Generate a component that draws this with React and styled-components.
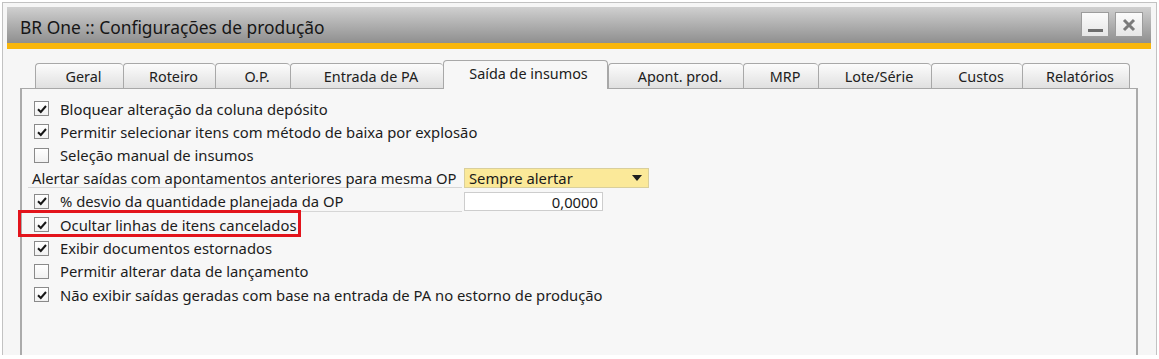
import React from 'react'
import styled, { createGlobalStyle } from 'styled-components'

const GlobalStyle = createGlobalStyle`
  body {
    margin: 0;
    background: #ffffff;
    font-family: "Noto Sans", "DejaVu Sans", sans-serif;
    color: #1e1e1e;
  }
`

const tabs = [
  { label: 'Geral', width: 88 },
  { label: 'Roteiro', width: 92 },
  { label: 'O.P.', width: 75 },
  { label: 'Entrada de PA', width: 153 },
  { label: 'Saída de insumos', width: 165, active: true },
  { label: 'Apont. prod.', width: 135 },
  { label: 'MRP', width: 75 },
  { label: 'Lote/Série', width: 113 },
  { label: 'Custos', width: 91 },
  { label: 'Relatórios', width: 108 },
]

const Check = ({ checked }) => (
  <Box>
    {checked && (
      <svg width="12" height="12" viewBox="0 0 12 12">
        <path d="M2 6.2 L4.8 9 L10 3" fill="none" stroke="#161616" strokeWidth="2" />
      </svg>
    )}
  </Box>
)

const App = () => {
  return (
    <>
      <GlobalStyle />
      <Window>
        <TitleBar>
          <Title>BR One :: Configurações de produção</Title>
          <Spacer />
          <TitleButton aria-label="minimizar">
            <MinGlyph />
          </TitleButton>
          <TitleButton aria-label="fechar">
            <svg width="14" height="14" viewBox="0 0 14 14">
              <path d="M2 2 L12 12 M12 2 L2 12" stroke="#7a7a7a" strokeWidth="3" />
            </svg>
          </TitleButton>
        </TitleBar>

        <Body>
          <TabStrip>
            {tabs.map((t) => (
              <Tab key={t.label} $width={t.width} $active={t.active}>
                {t.label}
              </Tab>
            ))}
          </TabStrip>

          <Panel>
            <CheckRow>
              <Check checked />
              <span>Bloquear alteração da coluna depósito</span>
            </CheckRow>
            <CheckRow>
              <Check checked />
              <span>Permitir selecionar itens com método de baixa por explosão</span>
            </CheckRow>
            <CheckRow>
              <Check />
              <span>Seleção manual de insumos</span>
            </CheckRow>

            <FieldRow>
              <FieldLabel $pad={4}>Alertar saídas com apontamentos anteriores para mesma OP</FieldLabel>
              <Select>
                <span>Sempre alertar</span>
                <Arrow />
              </Select>
            </FieldRow>
            <FieldRow>
              <FieldLabel $pad={6}>
                <Check checked />
                <span>% desvio da quantidade planejada da OP</span>
              </FieldLabel>
              <NumberInput>0,0000</NumberInput>
            </FieldRow>

            <CheckRow>
              <Highlight />
              <Check checked />
              <span>Ocultar linhas de itens cancelados</span>
            </CheckRow>
            <CheckRow>
              <Check checked />
              <span>Exibir documentos estornados</span>
            </CheckRow>
            <CheckRow>
              <Check />
              <span>Permitir alterar data de lançamento</span>
            </CheckRow>
            <CheckRow>
              <Check checked />
              <span>Não exibir saídas geradas com base na entrada de PA no estorno de produção</span>
            </CheckRow>
          </Panel>
        </Body>
      </Window>
    </>
  )
}

export default App

const Window = styled.div`
    margin: 2px 2px 0 2px;
    width: 1155px;
    height: 353px;
    box-sizing: border-box;
    border: 1px solid #c2c2c2;
    border-bottom: none;
    background: #f6f6f6;
    padding: 4px 5px 0 4px;
    display: flex;
    flex-direction: column;
    overflow: hidden;
`

const TitleBar = styled.div`
    height: 42px;
    box-sizing: border-box;
    display: flex;
    align-items: flex-start;
    padding: 5px 8px 0 13px;
    background: linear-gradient(#d0d0d0 0%, #b2b2b2 45%, #8f8f8f 100%);
    border-bottom: 6px solid #f8b60c;
`

const Title = styled.div`
    font-size: 17.4px;
    line-height: 30px;
    color: #161616;
`

const Spacer = styled.div`
    flex: 1;
`

const TitleButton = styled.div`
    width: 28px;
    height: 25px;
    box-sizing: border-box;
    margin-left: 6px;
    border: 1px solid #9c9c9c;
    background: linear-gradient(#fbfbfb, #e6e6e6);
    display: flex;
    align-items: center;
    justify-content: center;
`

const MinGlyph = styled.div`
    width: 15px;
    height: 3px;
    background: #6e6e6e;
    margin-top: 12px;
`

const Body = styled.div`
    flex: 1;
    display: flex;
    flex-direction: column;
    padding: 11px 13px 0 13px;
`

const TabStrip = styled.div`
    height: 28px;
    display: flex;
    align-items: flex-end;
    padding-left: 15px;
    position: relative;
    z-index: 1;
`

const Tab = styled.div`
    width: ${(p) => p.$width}px;
    height: ${(p) => (p.$active ? 29 : 25)}px;
    margin-bottom: ${(p) => (p.$active ? -1 : 0)}px;
    box-sizing: border-box;
    display: flex;
    align-items: center;
    justify-content: center;
    padding: ${(p) => (p.$active ? '0 0 3px 6px' : '0 0 0 8px')};
    font-size: 14.4px;
    color: #202020;
    border: 1px solid #a8a8a8;
    border-bottom: none;
    border-right: ${(p) => (p.$active ? '1px solid #a8a8a8' : 'none')};
    border-radius: 4px 4px 0 0;
    background: ${(p) => (p.$active ? '#f7f7f7' : 'linear-gradient(#fcfcfc, #e0e0e0)')};

    &:last-child {
        border-right: 1px solid #a8a8a8;
    }
`

const Panel = styled.div`
    flex: 1;
    background: #f7f7f7;
    border-top: 1px solid #a8a8a8;
    border-left: 2px solid #ababab;
    border-right: 2px solid #ababab;
    padding: 8px 0 0 12px;
    font-size: 14.8px;
    color: #1c1c1c;
`

const CheckRow = styled.div`
    position: relative;
    height: 23.25px;
    display: flex;
    align-items: center;
    gap: 11px;
`

const Box = styled.div`
    width: 15px;
    height: 15px;
    box-sizing: border-box;
    border: 1px solid #8a8a8a;
    background: linear-gradient(#ffffff, #f1f1f1);
    display: flex;
    align-items: center;
    justify-content: center;
    flex-shrink: 0;
`

const Highlight = styled.div`
    position: absolute;
    left: -16px;
    top: -3px;
    width: 283px;
    height: 27px;
    box-sizing: border-box;
    border: 3px solid #e3141c;
`

const FieldRow = styled.div`
    height: 23.25px;
    display: flex;
    align-items: center;
    margin-left: -6px;
`

const FieldLabel = styled.div`
    width: 434px;
    height: 20px;
    box-sizing: border-box;
    display: flex;
    align-items: center;
    gap: 11px;
    padding-left: ${(p) => p.$pad}px;
    border-bottom: 1px solid #d6d6d6;
    white-space: nowrap;
`

const Select = styled.div`
    width: 185px;
    height: 20px;
    margin-left: 2px;
    box-sizing: border-box;
    display: flex;
    align-items: center;
    justify-content: space-between;
    padding: 0 4px 0 4px;
    background: #fbe999;
    border: 1px solid #d9cf9c;
    color: #1a1a1a;
`

const Arrow = styled.div`
    width: 0;
    height: 0;
    border-left: 5px solid transparent;
    border-right: 5px solid transparent;
    border-top: 6px solid #1e1e1e;
    margin-right: 2px;
`

const NumberInput = styled.div`
    width: 139px;
    height: 19px;
    margin-left: 2px;
    box-sizing: border-box;
    display: flex;
    align-items: center;
    justify-content: flex-end;
    padding-right: 4px;
    background: #ffffff;
    border: 1px solid #cdcdcd;
    color: #1a1a1a;
`
